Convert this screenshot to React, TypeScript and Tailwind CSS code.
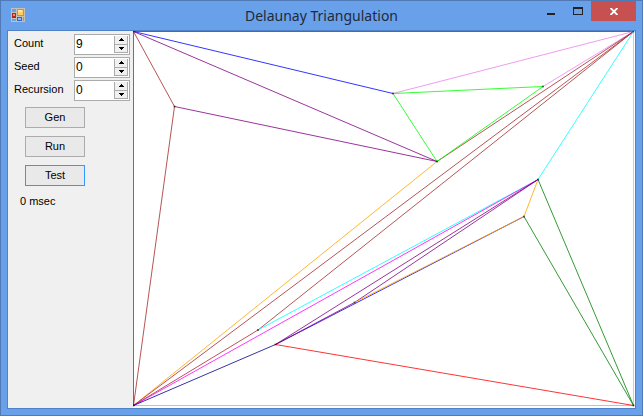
import { useState } from 'react';

type Point = [number, number];

const points: Record<string, Point> = {
  tl: [0, 0],
  tr: [500, 0],
  bl: [0, 374],
  br: [500, 374],
  a: [41, 75],
  b: [259.5, 62],
  c: [409.5, 55],
  d: [303.5, 130],
  e: [404.5, 148],
  f: [390.5, 185],
  g: [124.5, 298.5],
  h: [142, 313],
  i: [221, 271],
};

const edges: [string, string, string][] = [
  ['tl', 'b', 'blue'],
  ['tl', 'd', 'purple'],
  ['tl', 'a', 'brown'],
  ['a', 'd', 'purple'],
  ['a', 'bl', 'brown'],
  ['b', 'tr', 'violet'],
  ['c', 'tr', 'violet'],
  ['d', 'tr', 'brown'],
  ['b', 'c', 'lime'],
  ['b', 'd', 'lime'],
  ['c', 'd', 'lime'],
  ['d', 'bl', 'orange'],
  ['bl', 'tr', 'brown'],
  ['bl', 'g', 'brown'],
  ['g', 'tr', 'brown'],
  ['g', 'e', 'cyan'],
  ['e', 'tr', 'cyan'],
  ['bl', 'e', 'magenta'],
  ['bl', 'h', 'darkblue'],
  ['h', 'f', 'blue'],
  ['h', 'e', 'purple'],
  ['h', 'i', 'purple'],
  ['i', 'e', 'purple'],
  ['i', 'f', 'orange'],
  ['e', 'f', 'orange'],
  ['e', 'br', 'green'],
  ['f', 'br', 'green'],
  ['h', 'br', 'red'],
];

// Edges of the bounding square
const hull: [string, string, string][] = [
  ['tl', 'tr', '#2f8a4f'],
  ['tl', 'bl', '#bb5252'],
  ['bl', 'br', '#66ff66'],
  ['tr', 'br', '#f5b0f5'],
];

function AppIcon() {
  return (
    <svg className="w-3.5 h-3.5" viewBox="0 0 14 14" aria-hidden="true">
      <rect width="14" height="14" fill="#c8c0b8" />
      <rect x="1" y="1" width="4" height="3" fill="#6c9fe6" />
      <rect x="1" y="11" width="4" height="2" fill="#6c9fe6" />
      <rect x="12" y="9" width="1" height="4" fill="#6c9fe6" />
      <rect x="1" y="5" width="4" height="5" fill="#b3261e" />
      <rect x="2" y="6" width="2" height="2" fill="#f08a6a" />
      <rect x="6" y="1" width="7" height="7" fill="#d8901f" />
      <rect x="7" y="2" width="5" height="5" fill="#ffcf62" />
      <rect x="7" y="2" width="4" height="2" fill="#ffe7a6" />
      <rect x="6" y="9" width="5" height="4" fill="#2f68c4" />
      <rect x="7" y="10" width="3" height="2" fill="#8dbcff" />
    </svg>
  );
}

function Spinner({ id, label, initial }: { id: string; label: string; initial: number }) {
  const [value, setValue] = useState(initial);

  return (
    <div className="flex h-[21px]">
      <label htmlFor={id} className="w-[60px] leading-[19px]">{label}</label>
      <div className="flex w-14 h-[21px] p-px bg-white border border-[#ababab]">
        <input
          id={id}
          type="text"
          className="min-w-0 flex-1 h-4 bg-transparent outline-none leading-4 text-[12px]"
          value={value}
          onChange={(e) => setValue(Number(e.target.value) || 0)}
        />
        <div className="flex flex-col w-3.5">
          <button
            type="button"
            aria-label={`Increase ${label}`}
            className="flex flex-1 items-center justify-center bg-[#f0f0f0] border border-t-0 border-[#ababab]"
            onClick={() => setValue(value + 1)}
          >
            <svg className="w-[5px] h-[3px]" viewBox="0 0 5 3" shapeRendering="crispEdges">
              <path d="M2 0h1v1h1v1h1v1H0V2h1V1h1z" />
            </svg>
          </button>
          <button
            type="button"
            aria-label={`Decrease ${label}`}
            className="flex flex-1 items-center justify-center bg-[#f0f0f0] border border-t-0 border-[#ababab]"
            onClick={() => setValue(Math.max(0, value - 1))}
          >
            <svg className="w-[5px] h-[3px]" viewBox="0 0 5 3" shapeRendering="crispEdges">
              <path d="M0 0h5v1H4v1H3v1H2V2H1V1H0z" />
            </svg>
          </button>
        </div>
      </div>
    </div>
  );
}

function Edge({ from, to, color, width }: { from: Point; to: Point; color: string; width: number }) {
  return <line x1={from[0]} y1={from[1]} x2={to[0]} y2={to[1]} stroke={color} strokeWidth={width} />;
}

function TriangulationView() {
  return (
    <svg className="block w-full h-auto" viewBox="0 0 502 377" role="img" aria-label="Triangulation">
      <g transform="translate(0.5 0.5)">
        {hull.map(([from, to, color]) => (
          <Edge key={`${from}-${to}`} from={points[from]} to={points[to]} color={color} width={1} />
        ))}
        {edges.map(([from, to, color]) => (
          <Edge key={`${from}-${to}`} from={points[from]} to={points[to]} color={color} width={0.8} />
        ))}
        {Object.entries(points).map(([name, [x, y]]) => (
          <rect key={name} x={x - 0.9} y={y - 0.9} width="1.8" height="1.8" fill="black" fillOpacity="0.6" />
        ))}
      </g>
    </svg>
  );
}

export default function App() {
  return (
    <div className="min-h-screen flex flex-col bg-[#69a0ea] border border-[#4f7ab5] px-1.5 pb-1.5 font-['Liberation_Sans',sans-serif] text-[11px] text-black">
      {/* Title bar */}
      <header className="grid grid-cols-[1fr_auto_1fr] items-start h-[29px]">
        <div className="pl-1 pt-[7px]">
          <AppIcon />
        </div>
        <h1 className="pt-1 text-[14px] leading-[22px] font-['Noto_Sans',sans-serif] text-[#1f2a3a]">
          Delaunay Triangulation
        </h1>
        <div className="flex justify-end h-5">
          <button type="button" aria-label="Minimize" className="w-7 flex justify-center pt-3">
            <span className="w-2 h-0.5 bg-[#222]" />
          </button>
          <button type="button" aria-label="Maximize" className="w-[26px] flex justify-center pt-1.5">
            <span className="w-2.5 h-2 border border-t-2 border-[#222]" />
          </button>
          <button type="button" aria-label="Close" className="w-[45px] flex items-center justify-center bg-[#c75050]">
            <svg className="w-2 h-[7px]" viewBox="0 0 8 7" stroke="white" strokeWidth="1.9">
              <path d="M0.5 0 7.5 7M7.5 0 0.5 7" />
            </svg>
          </button>
        </div>
      </header>

      <main className="flex flex-1 bg-white border border-[#4f82c8]">
        <aside className="w-[125px] shrink-0 bg-[#f0f0f0] pl-1.5 pt-[3px]">
          <div className="flex flex-col gap-0.5">
            <Spinner id="count" label="Count" initial={9} />
            <Spinner id="seed" label="Seed" initial={0} />
            <Spinner id="recursion" label="Recursion" initial={0} />
          </div>
          <div className="flex flex-col gap-2 pl-[11px] pt-1.5">
            <button type="button" className="w-[60px] h-[21px] border border-[#acacac] bg-[#e9e9e9]">Gen</button>
            <button type="button" className="w-[60px] h-[21px] border border-[#acacac] bg-[#e9e9e9]">Run</button>
            <button type="button" className="w-[60px] h-[21px] border border-[#3399ff] bg-[#e9e9e9]">Test</button>
          </div>
          <p className="pl-1.5 pt-[7px]">0 msec</p>
        </aside>
        <div className="flex-1 min-w-0">
          <TriangulationView />
        </div>
      </main>
    </div>
  );
}
